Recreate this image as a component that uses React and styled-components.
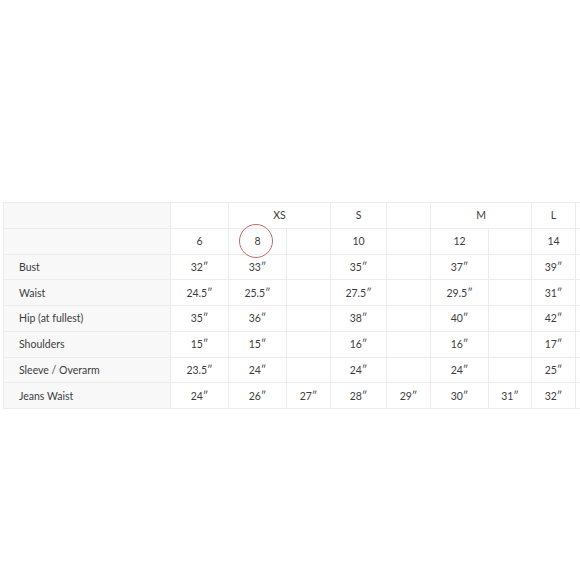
import React from 'react';
import styled, { createGlobalStyle } from 'styled-components';

const Global = createGlobalStyle`
  html, body {
    margin: 0;
    padding: 0;
    background: #fff;
    overflow: hidden;
  }
  body {
    font-family: Lato, "Open Sans", sans-serif;
  }
`;

const Page = styled.div`
  width: 580px;
  height: 580px;
  overflow: hidden;
  padding: 202px 0 0 3px;
  box-sizing: border-box;
`;

const Table = styled.table`
  border-collapse: collapse;
  table-layout: fixed;
  width: 627px;
  color: #3d3d3d;
  font-size: 10.5px;
`;

const Row = styled.tr`
  height: 25.75px;
`;

const Label = styled.td`
  background: #f8f8f8;
  border: 1px solid #ececec;
  padding: 0 0 0 15px;
  text-align: left;
  white-space: nowrap;
`;

const Cell = styled.td`
  border: 1px solid #ececec;
  text-align: center;
  padding: 0;
  white-space: nowrap;
  position: relative;

  ${(p) =>
    p.$circled &&
    `
    &::after {
      content: '';
      position: absolute;
      left: 50%;
      top: 50%;
      width: 34px;
      height: 34px;
      margin: -17px 0 0 -19px;
      border: 1.5px solid #c7676b;
      border-radius: 50%;
      box-sizing: border-box;
    }
  `}
`;

const widths = [167, 58, 58, 44, 56, 44, 58, 43, 44, 55];

const q = (v) => (v ? `${v}″` : '');

const rows = [
  ['Bust', ['32', '33', '', '35', '', '37', '', '39', '']],
  ['Waist', ['24.5', '25.5', '', '27.5', '', '29.5', '', '31', '']],
  ['Hip (at fullest)', ['35', '36', '', '38', '', '40', '', '42', '']],
  ['Shoulders', ['15', '15', '', '16', '', '16', '', '17', '']],
  ['Sleeve / Overarm', ['23.5', '24', '', '24', '', '24', '', '25', '']],
  ['Jeans Waist', ['24', '26', '27', '28', '29', '30', '31', '32', '']],
];

const sizes = ['6', '8', '', '10', '', '12', '', '14', ''];

export default function App() {
  return (
    <Page>
      <Global />
      <Table>
        <colgroup>
          {widths.map((w, i) => (
            <col key={i} style={{ width: w }} />
          ))}
        </colgroup>
        <tbody>
          <Row>
            <Label />
            <Cell />
            <Cell colSpan={2}>XS</Cell>
            <Cell>S</Cell>
            <Cell />
            <Cell colSpan={2}>M</Cell>
            <Cell>L</Cell>
            <Cell />
          </Row>
          <Row>
            <Label />
            {sizes.map((s, i) => (
              <Cell key={i} $circled={s === '8'}>
                {s}
              </Cell>
            ))}
          </Row>
          {rows.map(([name, vals]) => (
            <Row key={name}>
              <Label>{name}</Label>
              {vals.map((v, i) => (
                <Cell key={i}>{q(v)}</Cell>
              ))}
            </Row>
          ))}
        </tbody>
      </Table>
    </Page>
  );
}
